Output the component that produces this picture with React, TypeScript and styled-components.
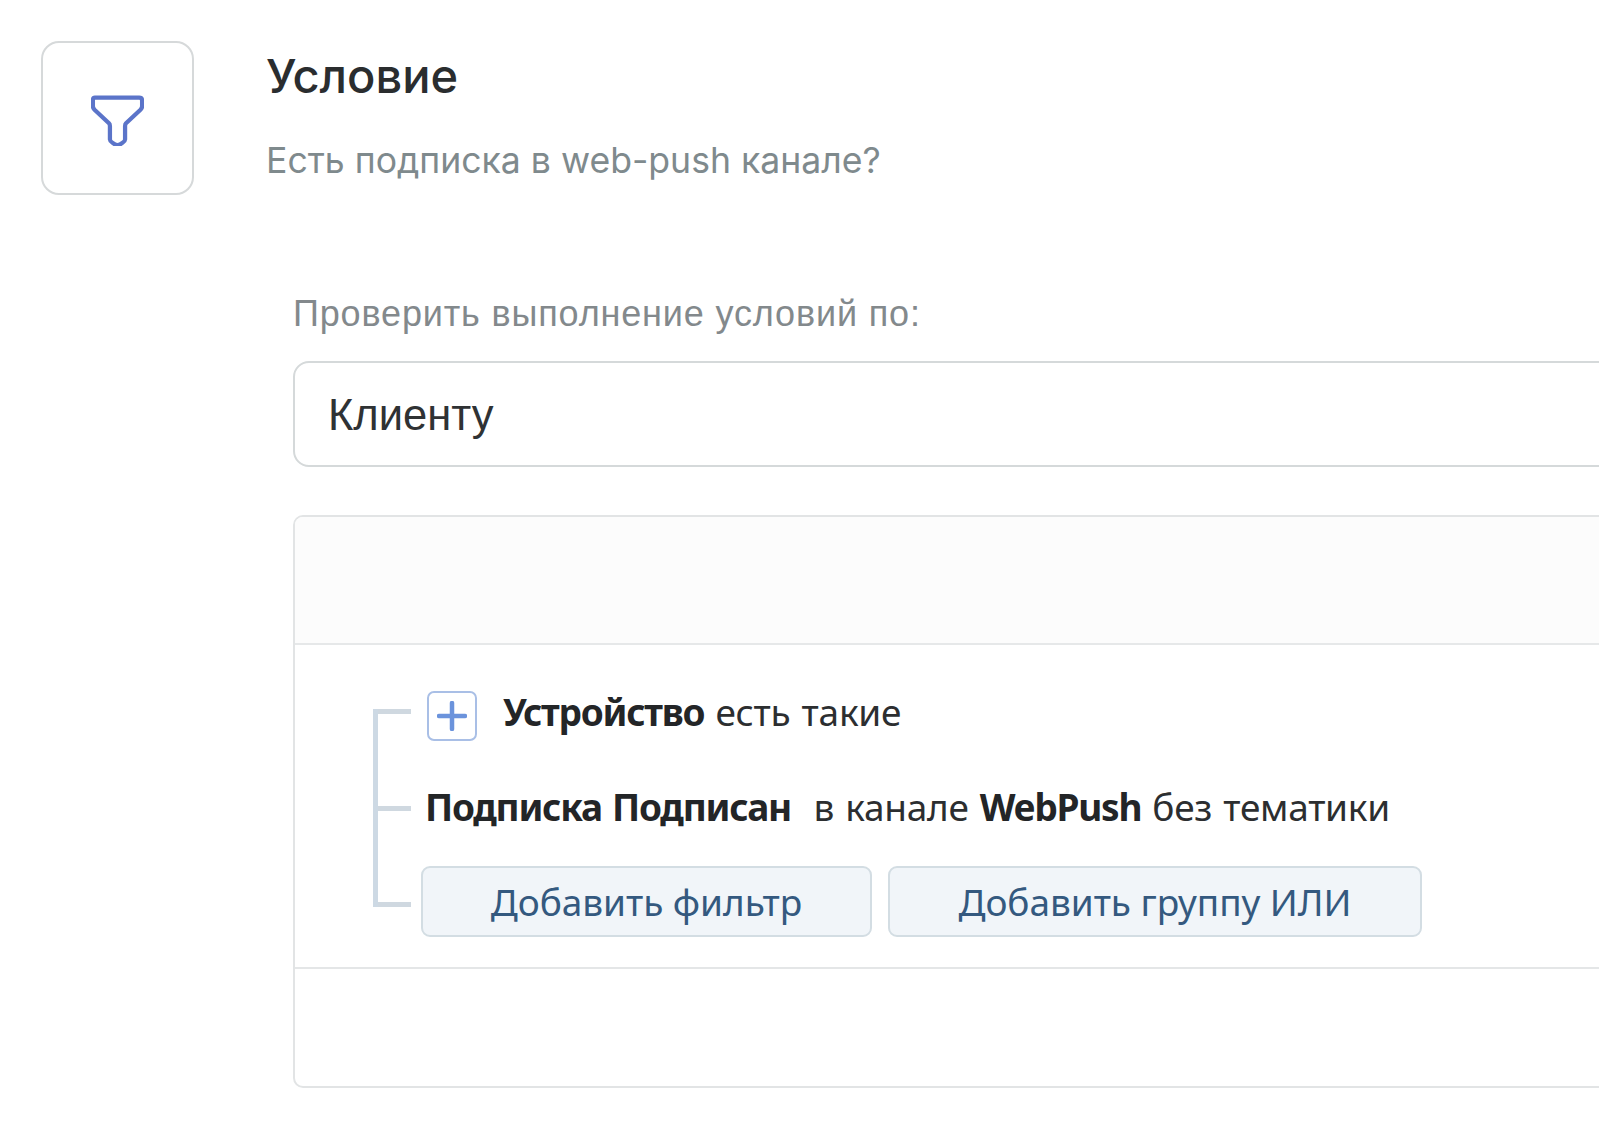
import * as React from "react";
import styled, { createGlobalStyle } from "styled-components";

const GlobalStyle = createGlobalStyle`
  html, body {
    margin: 0;
    background: #fff;
    overflow: hidden;
  }
  body {
    font-family: Inter, "Noto Sans", sans-serif;
  }
`;

const Page = styled.div`
  width: 1599px;
  height: 1141px;
  box-sizing: border-box;
  padding: 41px 0 0 41px;
  overflow: hidden;
`;

const Header = styled.header`
  display: flex;
  gap: 72px;
`;

const IconBox = styled.div`
  width: 153px;
  height: 154px;
  box-sizing: border-box;
  flex: none;
  display: flex;
  align-items: center;
  justify-content: center;
  padding-top: 3px;
  border: 2px solid #d6d9da;
  border-radius: 18px;
  color: #5b74c9;
`;

const Titles = styled.div`
  display: flex;
  flex-direction: column;
`;

const Title = styled.h1`
  margin: 8px 0 0;
  font-size: 47px;
  line-height: 54px;
  font-weight: 500;
  color: #2a2d2f;
`;

const Subtitle = styled.p`
  margin: 37px 0 0;
  font-size: 35.6px;
  line-height: 42px;
  font-weight: 400;
  color: #7f8a8d;
`;

const Form = styled.div`
  margin: 98px 0 0 252px;
  width: 1500px;
`;

const Label = styled.div`
  font-family: "Liberation Sans", Arial, sans-serif;
  font-size: 36px;
  line-height: 42px;
  letter-spacing: 0.85px;
  color: #83898c;
`;

const SelectBox = styled.div`
  margin-top: 26px;
  height: 106px;
  box-sizing: border-box;
  padding: 2px 0 0 33px;
  display: flex;
  align-items: center;
  border: 2px solid #d5d9da;
  border-radius: 16px;
  font-family: "Liberation Sans", Arial, sans-serif;
  font-size: 43.5px;
  color: #2f3234;
`;

const Panel = styled.section`
  margin-top: 48px;
  height: 573px;
  box-sizing: border-box;
  display: flex;
  flex-direction: column;
  border: 2px solid #e2e4e5;
  border-radius: 10px;
  overflow: hidden;
`;

const PanelHead = styled.div`
  height: 126px;
  flex: none;
  background: #fcfcfc;
  border-bottom: 2px solid #e6e8e9;
`;

const PanelBody = styled.div`
  height: 324px;
  flex: none;
  box-sizing: border-box;
  padding: 42px 0 0 78px;
  display: flex;
  align-items: stretch;
  border-bottom: 2px solid #e4e6e7;
  font-family: "Noto Sans", sans-serif;
  color: #2c2e30;
`;

const Rail = styled.div`
  width: 38px;
  flex: none;
  box-sizing: border-box;
  height: 198px;
  margin: 22px 10px 0 0;
  display: flex;
  flex-direction: column;
  justify-content: space-between;
  border-left: 5px solid #cdd9e4;
`;

const Tick = styled.span`
  display: block;
  height: 5px;
  background: #cfd8e0;
`;

const Rows = styled.div`
  display: flex;
  flex-direction: column;
`;

const TextRow = styled.div<{ $top: number; $indent: number }>`
  display: flex;
  align-items: center;
  margin-top: ${(p) => p.$top}px;
  padding-left: ${(p) => p.$indent}px;
  font-size: 37px;
  line-height: 50px;
  letter-spacing: -0.25px;
  word-spacing: 1.8px;
  white-space: pre;
  b {
    font-weight: 700;
    letter-spacing: -1.25px;
    color: #232527;
  }
`;

const RowLabel = styled.span`
  padding-bottom: 8px;
`;

const PlusBox = styled.div`
  width: 50px;
  height: 50px;
  box-sizing: border-box;
  flex: none;
  margin-right: 26px;
  display: flex;
  align-items: center;
  justify-content: center;
  border: 2px solid #a9bfe6;
  border-radius: 7px;
  color: #6b93dc;
`;

const Buttons = styled.div`
  display: flex;
  gap: 16px;
  margin-top: 34px;
`;

const Button = styled.button<{ $width: number }>`
  width: ${(p) => p.$width}px;
  height: 71px;
  padding: 0;
  border: 2px solid #d3dde3;
  border-radius: 9px;
  background: #f1f5f9;
  font-family: "Noto Sans", sans-serif;
  font-size: 37px;
  letter-spacing: -0.05px;
  color: #34597f;
`;

const FunnelIcon = () => (
  <svg width="53" height="53" viewBox="0 0 56 56" fill="none" stroke="currentColor" strokeWidth="4.5" strokeLinejoin="round">
    <path d="M4 5h47c2 0 3 1 3 3v6c0 2-1 3-2 4L37 32c-1 1-1 2-1 3v14c0 2-5 6-8 6s-8-4-8-6V35c0-1 0-2-1-3L4 18c-1-1-2-2-2-4V8c0-2 1-3 2-3z" />
  </svg>
);

const PlusIcon = () => (
  <svg width="30" height="30" viewBox="0 0 30 30" stroke="currentColor" strokeWidth="4.5" strokeLinecap="round">
    <path d="M15 2v26M2 15h26" />
  </svg>
);

const App = () => {
  return (
    <Page>
      <GlobalStyle />
      <Header>
        <IconBox>
          <FunnelIcon />
        </IconBox>
        <Titles>
          <Title>Условие</Title>
          <Subtitle>Есть подписка в web-push канале?</Subtitle>
        </Titles>
      </Header>
      <Form>
        <Label>Проверить выполнение условий по:</Label>
        <SelectBox>Клиенту</SelectBox>
        <Panel>
          <PanelHead />
          <PanelBody>
            <Rail>
              <Tick />
              <Tick />
              <Tick />
            </Rail>
            <Rows>
              <TextRow $top={0} $indent={6}>
                <PlusBox>
                  <PlusIcon />
                </PlusBox>
                <RowLabel>
                  <b>Устройство</b> есть такие
                </RowLabel>
              </TextRow>
              <TextRow $top={37} $indent={4}>
                <span>
                  <b>Подписка Подписан</b>{"  "}в канале <b>WebPush</b> без тематики
                </span>
              </TextRow>
              <Buttons>
                <Button $width={451}>Добавить фильтр</Button>
                <Button $width={534}>Добавить группу ИЛИ</Button>
              </Buttons>
            </Rows>
          </PanelBody>
        </Panel>
      </Form>
    </Page>
  );
};

export default App;
